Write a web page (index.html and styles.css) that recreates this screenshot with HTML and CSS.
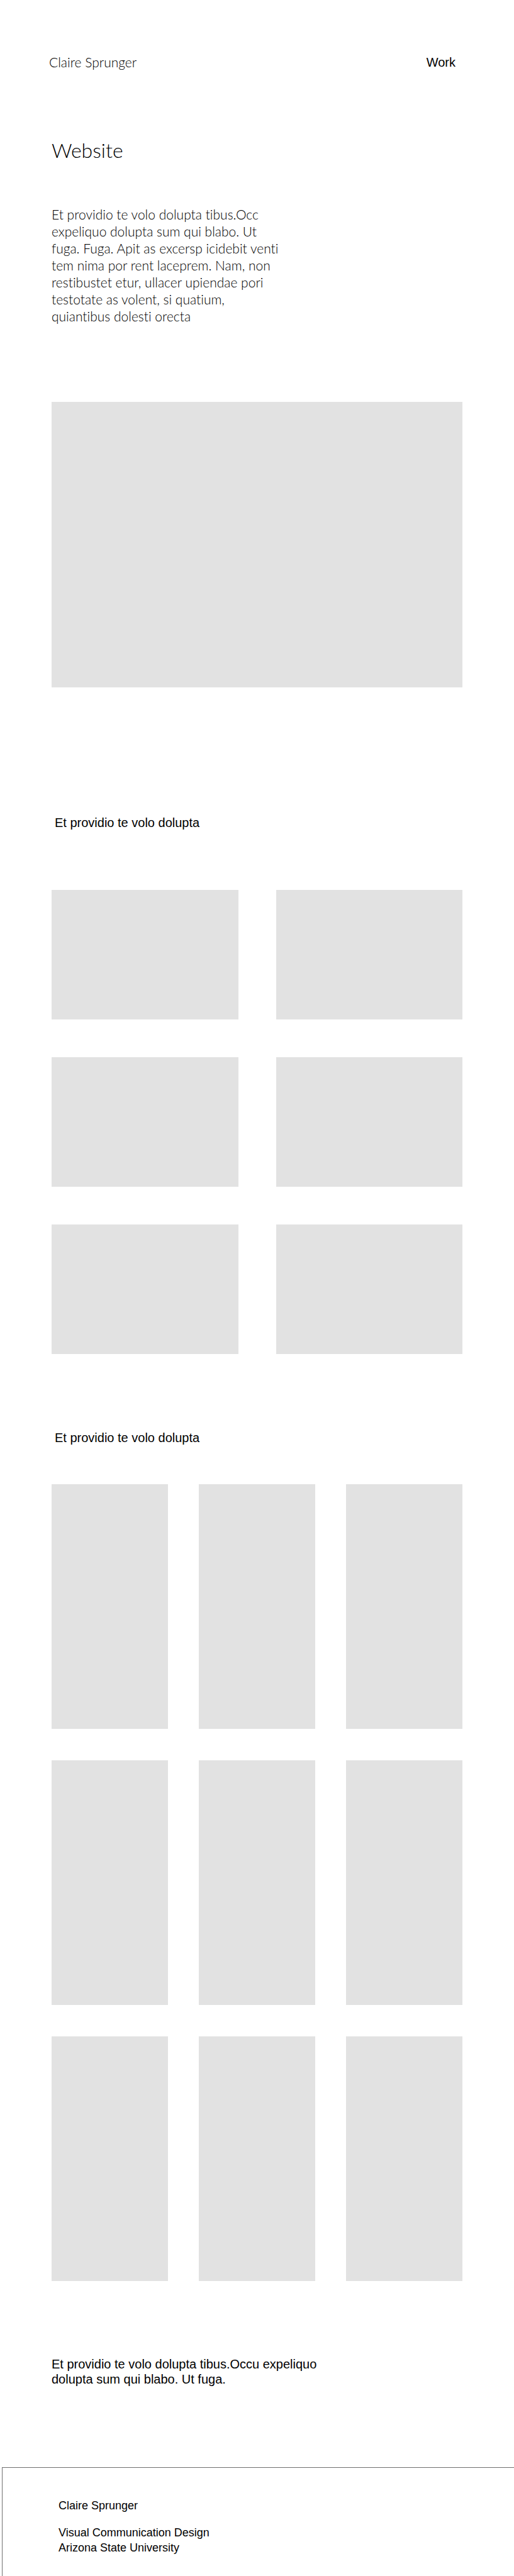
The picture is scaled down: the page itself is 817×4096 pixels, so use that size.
FILE: index.html
```html
<!DOCTYPE html>
<html lang="en">
<head>
<meta charset="utf-8">
<meta name="viewport" content="width=device-width, initial-scale=1">
<title>Claire Sprunger</title>
<link rel="stylesheet" href="styles.css">
</head>
<body>
<header class="site-header">
  <a class="brand" href="#">Claire Sprunger</a>
  <nav><a class="nav-link" href="#work">Work</a></nav>
</header>
<main class="content">
  <h1 class="title">Website</h1>
  <p class="intro">Et providio te volo dolupta tibus.Occ<br>expeliquo dolupta sum qui blabo. Ut<br>fuga. Fuga. Apit as excersp icidebit venti<br>tem nima por rent laceprem. Nam, non<br>restibustet etur, ullacer upiendae pori<br>testotate as volent, si quatium,<br>quiantibus dolesti orecta</p>
  <div class="tile hero"></div>
  <section id="work">
    <h2 class="heading">Et providio te volo dolupta</h2>
    <div class="grid pairs">
      <div class="tile"></div><div class="tile"></div>
      <div class="tile"></div><div class="tile"></div>
      <div class="tile"></div><div class="tile"></div>
    </div>
  </section>
  <section>
    <h2 class="heading heading-thirds">Et providio te volo dolupta</h2>
    <div class="grid thirds">
      <div class="tile"></div><div class="tile"></div><div class="tile"></div>
      <div class="tile"></div><div class="tile"></div><div class="tile"></div>
      <div class="tile"></div><div class="tile"></div><div class="tile"></div>
    </div>
  </section>
  <p class="closing">Et providio te volo dolupta tibus.Occu expeliquo<br>dolupta sum qui blabo. Ut fuga.</p>
</main>
<footer class="site-footer">
  <p>Claire Sprunger</p>
  <p>Visual Communication Design<br>Arizona State University</p>
</footer>
</body>
</html>
```
FILE: styles.css
```css
* {
  box-sizing: border-box;
}

body {
  margin: 0;
  background: #fff;
  color: #000;
  font: 20px/24px "Liberation Sans", Arial, sans-serif;
}

h1,
h2,
p {
  margin: 0;
  font-weight: 400;
}

a {
  color: inherit;
  text-decoration: none;
}

.site-header {
  display: flex;
  justify-content: space-between;
  padding: 87px 93px 0 78px;
}

.brand,
.title,
.intro {
  font-family: Lato, sans-serif;
  font-weight: 300;
  font-variant-ligatures: none;
}

.brand {
  font-size: 21px;
}

.content {
  padding: 0 82px;
}

.title {
  margin-top: 106px;
  font-size: 32px;
  line-height: 44px;
}

.intro {
  margin-top: 66px;
  font-size: 21px;
  line-height: 27px;
}

.tile {
  background: #e2e2e2;
}

.hero {
  height: 454px;
  margin-top: 123px;
}

.heading {
  margin-top: 203px;
  padding-left: 5px;
  font-size: 20px;
}

.heading-thirds {
  margin-top: 121px;
}

.grid {
  display: grid;
}

.pairs {
  grid-template-columns: repeat(2, 1fr);
  grid-auto-rows: 206px;
  gap: 60px;
  margin-top: 95px;
}

.thirds {
  grid-template-columns: repeat(3, 1fr);
  grid-auto-rows: 389px;
  gap: 50px 49px;
  margin-top: 62px;
}

.closing {
  margin-top: 120px;
}

.site-footer {
  display: grid;
  gap: 19px;
  margin: 128px 0 0 3px;
  padding: 48px 89px 33px;
  border: solid #707070;
  border-width: 1px 0 0 1px;
  font-size: 18px;
}
```
